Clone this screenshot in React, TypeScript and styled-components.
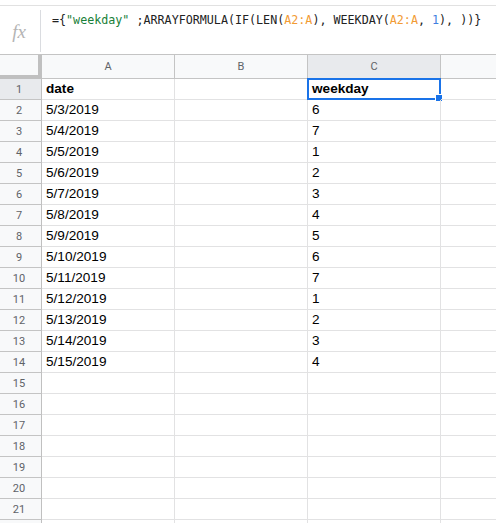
import * as React from "react";
import styled, { createGlobalStyle } from "styled-components";

const GlobalStyle = createGlobalStyle`
  html, body {
    margin: 0;
    padding: 0;
    background: #ffffff;
  }
  body {
    font-family: "Liberation Sans", Arial, sans-serif;
    overflow: hidden;
  }
`;

const Page = styled.div`
  width: 496px;
  height: 523px;
  overflow: hidden;
  background: #fff;
`;

const TopStrip = styled.div`
  height: 5px;
  border-bottom: 1px solid #e1e1e1;
`;

const FormulaBar = styled.div`
  display: flex;
  height: 48px;
  border-bottom: 1px solid #c4c4c4;
`;

const FxBox = styled.div`
  width: 41px;
  display: flex;
  align-items: center;
  justify-content: center;
  padding-right: 2px;
  box-sizing: border-box;
  margin: 4px 0 2px;
  border-right: 1px solid #dadce0;
  font-family: "Liberation Serif", "Times New Roman", serif;
  font-style: italic;
  font-size: 19px;
  color: #b4b4b4;
  padding-top: 2px;
`;

const FormulaText = styled.div`
  padding: 6px 0 0 11px;
  font-family: "DejaVu Sans Mono", "Liberation Mono", monospace;
  font-size: 11.7px;
  line-height: 16px;
  color: #222;
  white-space: pre;
`;

const Tok = styled.span<{ $kind: "str" | "ref" | "num" }>`
  color: ${p => (p.$kind === "str" ? "#188038" : p.$kind === "ref" ? "#f29b34" : "#3f7fe0")};
`;

const Grid = styled.div`
  display: grid;
  grid-template-columns: 42px repeat(4, 133px);
  grid-template-rows: 24px;
  grid-auto-rows: 21px;
  width: 574px;
`;

const Corner = styled.div`
  background: #f8f9fa;
  border-right: 4px solid #c0c0c0;
  border-bottom: 4px solid #c0c0c0;
  box-sizing: border-box;
`;

const ColHead = styled.div<{ $active?: boolean }>`
  box-sizing: border-box;
  background: ${p => (p.$active ? "#e8eaed" : "#f8f9fa")};
  border-right: 1px solid #c4c4c4;
  border-bottom: 1px solid #c4c4c4;
  display: flex;
  align-items: center;
  justify-content: center;
  font-family: Roboto, "Liberation Sans", sans-serif;
  font-size: 11px;
  color: #5f6368;
`;

const RowHead = styled.div<{ $active?: boolean }>`
  box-sizing: border-box;
  background: ${p => (p.$active ? "#e8eaed" : "#f8f9fa")};
  border-right: 1px solid #c0c0c0;
  border-bottom: 1px solid #c4c4c4;
  display: flex;
  align-items: center;
  justify-content: center;
  padding-right: 3px;
  font-family: Roboto, "Liberation Sans", sans-serif;
  font-size: 11px;
  color: #5f6368;
`;

const Cell = styled.div<{ $bold?: boolean }>`
  position: relative;
  box-sizing: border-box;
  border-right: 1px solid #e2e2e3;
  border-bottom: 1px solid #e2e2e3;
  display: flex;
  align-items: flex-end;
  padding: 0 3px 3px 4px;
  font-family: "Liberation Sans", Arial, sans-serif;
  font-size: 13.6px;
  line-height: 15px;
  font-weight: ${p => (p.$bold ? 700 : 400)};
  color: #000;
  white-space: nowrap;
  overflow: visible;
`;

const Selection = styled.div`
  position: absolute;
  left: -1px;
  top: -1px;
  right: -1px;
  bottom: -1px;
  border: 2px solid #1a73e8;
  pointer-events: none;
`;

const Handle = styled.div`
  position: absolute;
  right: -4px;
  bottom: -4px;
  width: 6px;
  height: 6px;
  background: #1a73e8;
  border: 1px solid #fff;
`;

const dates = [
  "5/3/2019", "5/4/2019", "5/5/2019", "5/6/2019", "5/7/2019", "5/8/2019", "5/9/2019",
  "5/10/2019", "5/11/2019", "5/12/2019", "5/13/2019", "5/14/2019", "5/15/2019",
];
const weekdays = ["6", "7", "1", "2", "3", "4", "5", "6", "7", "1", "2", "3", "4"];

const rows: { a: string; c: string; bold?: boolean }[] = [
  { a: "date", c: "weekday", bold: true },
  ...dates.map((d, i) => ({ a: d, c: weekdays[i] })),
];
while (rows.length < 22) rows.push({ a: "", c: "" });

const App = () => (
  <Page>
    <GlobalStyle />
    <TopStrip />
    <FormulaBar>
      <FxBox>fx</FxBox>
      <FormulaText>
        {"={"}<Tok $kind="str">"weekday"</Tok>{" ;ARRAYFORMULA(IF(LEN("}<Tok $kind="ref">A2:A</Tok>{"), WEEKDAY("}<Tok $kind="ref">A2:A</Tok>{", "}<Tok $kind="num">1</Tok>{"), ))}"}
      </FormulaText>
    </FormulaBar>
    <Grid>
      <Corner />
      <ColHead>A</ColHead>
      <ColHead>B</ColHead>
      <ColHead $active>C</ColHead>
      <ColHead>D</ColHead>
      {rows.map((r, i) => (
        <React.Fragment key={i}>
          <RowHead $active={i === 0}>{i + 1}</RowHead>
          <Cell $bold={r.bold}>{r.a}</Cell>
          <Cell />
          <Cell $bold={r.bold}>
            {r.c}
            {i === 0 && (
              <Selection>
                <Handle />
              </Selection>
            )}
          </Cell>
          <Cell />
        </React.Fragment>
      ))}
    </Grid>
  </Page>
);

export default App;
